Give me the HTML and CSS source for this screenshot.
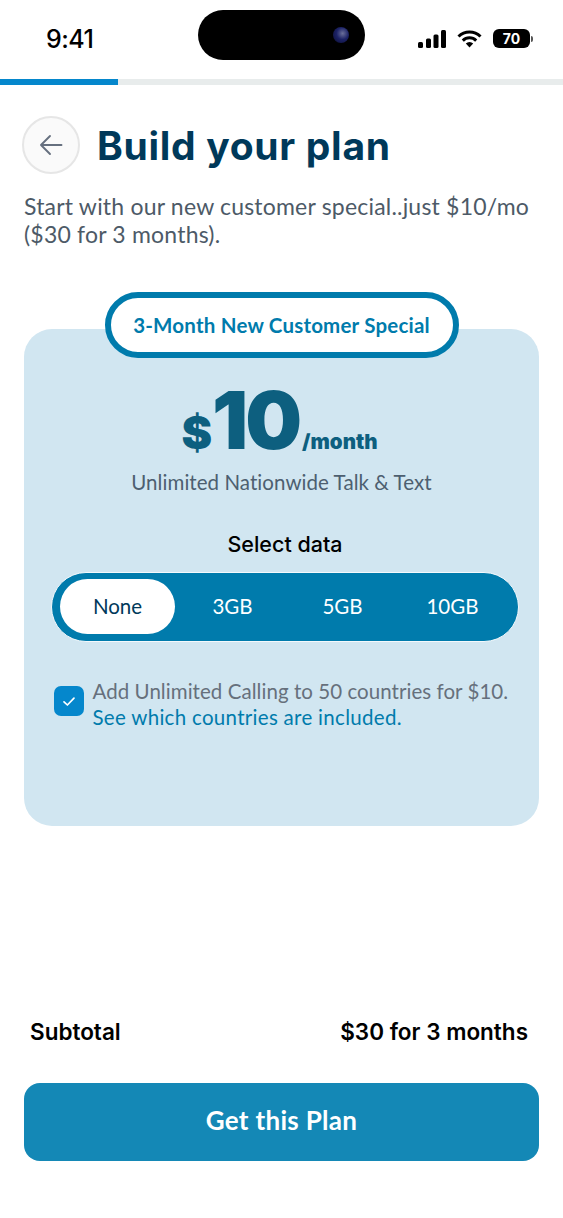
FILE: index.html
```html
<!DOCTYPE html>
<html lang="en">
<head>
    <meta charset="UTF-8">
    <meta name="viewport" content="width=device-width, initial-scale=1.0">
    <title>Build your plan</title>
    <link rel="stylesheet" href="styles.css">
</head>
<body>
    <div class="phone">
        <div class="status-bar">
            <span class="time">9:41</span>
            <div class="island"><span class="camera"></span></div>
            <div class="status-icons">
                <svg width="28" height="18" viewBox="0 0 28 18">
                    <rect x="0" y="12" width="5" height="6" rx="1.5" fill="#000"/>
                    <rect x="8" y="8.5" width="5" height="9.5" rx="1.5" fill="#000"/>
                    <rect x="15.5" y="4.5" width="5" height="13.5" rx="1.5" fill="#000"/>
                    <rect x="23" y="0" width="5" height="18" rx="1.5" fill="#000"/>
                </svg>
                <svg width="25" height="18" viewBox="0 0 25 18">
                    <path d="M1.5 6.5a15.5 15.5 0 0 1 22 0" fill="none" stroke="#000" stroke-width="3"/>
                    <path d="M5.8 10.6a9.5 9.5 0 0 1 13.4 0" fill="none" stroke="#000" stroke-width="3"/>
                    <path d="M8.8 13.6l3.7 4 3.7-4a5.2 5.2 0 0 0-7.4 0z" fill="#000"/>
                </svg>
                <div class="battery"><span class="battery-level">70</span><span class="battery-tip"></span></div>
            </div>
        </div>

        <div class="progress"><div class="progress-fill"></div></div>

        <div class="content">
            <div class="header">
                <button type="button" class="back-button">
                    <svg width="24" height="22" viewBox="0 0 24 22">
                        <path d="M22.5 11H2M11 2l-9 9 9 9" fill="none" stroke="#66707f" stroke-width="1.9" stroke-linecap="round" stroke-linejoin="round"/>
                    </svg>
                </button>
                <h1>Build your plan</h1>
            </div>
            <p class="intro">Start with our new customer special..just $10/mo ($30 for 3 months).</p>

            <div class="plan-card">
                <div class="special-pill">3-Month New Customer Special</div>
                <div class="price">
                    <span class="price-dollar">$</span><span class="price-amount">10</span><span class="price-unit">/month</span>
                </div>
                <p class="plan-name">Unlimited Nationwide Talk &amp; Text</p>
                <h2>Select data</h2>
                <div class="data-picker">
                    <button type="button" class="data-option active">None</button>
                    <button type="button" class="data-option">3GB</button>
                    <button type="button" class="data-option">5GB</button>
                    <button type="button" class="data-option">10GB</button>
                </div>
                <div class="calling-addon">
                    <span class="checkbox">
                        <svg width="14" height="11" viewBox="0 0 14 11">
                            <path d="M2 5.8l3.4 3.2L12 2.2" fill="none" stroke="#fff" stroke-width="1.7" stroke-linecap="round" stroke-linejoin="round"/>
                        </svg>
                    </span>
                    <p>Add Unlimited Calling to 50 countries for $10.<br><a href="#">See which countries are included.</a></p>
                </div>
            </div>

            <div class="subtotal">
                <span>Subtotal</span>
                <span>$30 for 3 months</span>
            </div>
            <button type="button" class="cta">Get this Plan</button>
        </div>
    </div>
</body>
</html>
```

FILE: styles.css
```css
body {
    margin: 0;
    background-color: #fff;
    font-family: "Lato", "Liberation Sans", sans-serif;
}
p, h1, h2 {
    margin: 0;
}
button {
    font-family: inherit;
    border: none;
    padding: 0;
}
.phone {
    width: 563px;
    height: 1218px;
    overflow: hidden;
}

/* status bar */
.status-bar {
    height: 79px;
    display: flex;
    align-items: flex-start;
}
.time {
    width: 198px;
    box-sizing: border-box;
    padding: 24px 0 0 46px;
    font-family: "Inter", sans-serif;
    font-size: 25px;
    line-height: 30px;
    font-weight: 500;
    letter-spacing: -0.5px;
    color: #000;
}
.island {
    width: 167px;
    height: 50px;
    margin-top: 10px;
    border-radius: 25px;
    background-color: #000;
    display: flex;
    justify-content: flex-end;
    align-items: center;
    padding-right: 16px;
    box-sizing: border-box;
}
.camera {
    width: 16px;
    height: 16px;
    border-radius: 50%;
    background: radial-gradient(circle at 60% 40%, #6a6f9a 0, #1c2266 45%, #0a0c2c 100%);
}
.status-icons {
    display: flex;
    align-items: center;
    margin: 29px 0 0 53px;
    gap: 11px;
}
.battery {
    display: flex;
    align-items: center;
}
.battery-level {
    width: 37px;
    height: 19px;
    border-radius: 6px;
    background-color: #000;
    color: #fff;
    font-family: "Inter", sans-serif;
    font-size: 14px;
    font-weight: 700;
    line-height: 19px;
    text-align: center;
}
.battery-tip {
    width: 2px;
    height: 6px;
    margin-left: 1px;
    border-radius: 0 2px 2px 0;
    background-color: #555;
}

/* progress */
.progress {
    height: 6px;
    background-color: #e8ecec;
}
.progress-fill {
    width: 118px;
    height: 100%;
    background-color: #0587cc;
}

.content {
    padding: 31px 24px 0;
}
.header {
    display: flex;
    align-items: center;
    gap: 17px;
}
.back-button {
    width: 58px;
    height: 58px;
    margin-left: -2px;
    border-radius: 50%;
    border: 2px solid #e6e6e6;
    background-color: #fafafa;
    display: flex;
    align-items: center;
    justify-content: center;
    box-sizing: border-box;
}
h1 {
    font-family: "Inter", sans-serif;
    font-size: 39px;
    line-height: 60px;
    height: 58px;
    font-weight: 700;
    letter-spacing: 0.7px;
    color: #00395a;
}
.intro {
    margin-top: 18px;
    font-size: 23px;
    line-height: 28px;
    letter-spacing: 0.2px;
    color: #4d5a67;
}

/* plan card */
.plan-card {
    height: 497px;
    margin-top: 81px;
    border-radius: 28px;
    background-color: #d1e6f1;
    display: flex;
    flex-direction: column;
    align-items: center;
    box-sizing: border-box;
}
.special-pill {
    width: 354px;
    height: 66px;
    margin-top: -37px;
    border: 6px solid #007bac;
    border-radius: 33px;
    background-color: #fff;
    box-sizing: border-box;
    color: #007bac;
    font-size: 20.5px;
    font-weight: 700;
    letter-spacing: 0.2px;
    line-height: 54px;
    text-align: center;
}
.price {
    display: flex;
    align-items: baseline;
    margin: 22px 4px 0 0;
    height: 80px;
    font-family: "Inter", sans-serif;
    color: #0d5f7f;
    font-weight: 900;
}
.price-dollar {
    font-size: 46px;
}
.price-amount {
    font-size: 80px;
    line-height: 80px;
    letter-spacing: -3px;
}
.price-unit {
    font-size: 20.5px;
    margin-left: 3px;
}
.plan-name {
    margin-top: 9px;
    font-size: 20.5px;
    line-height: 26px;
    letter-spacing: 0.05px;
    color: #4d5f70;
}
h2 {
    margin: 36px 0 0 7px;
    font-family: "Inter", sans-serif;
    font-size: 21.5px;
    line-height: 26px;
    font-weight: 500;
    color: #000;
}
.data-picker {
    width: 468px;
    height: 70px;
    margin: 15px 0 0 6px;
    border: 1.5px solid #f4f9fc;
    border-radius: 35px;
    background-color: #007bac;
    box-sizing: border-box;
    display: flex;
    align-items: center;
    padding: 0 0 2px 8.5px;
}
.data-option {
    flex: 0 0 110px;
    background: none;
    color: #fff;
    font-size: 20.5px;
    line-height: 55px;
}
.data-option.active {
    flex: 0 0 115px;
    height: 55px;
    margin-right: 2.5px;
    border-radius: 27.5px;
    background-color: #fff;
    color: #00395a;
}
.calling-addon {
    width: 456px;
    margin-top: 36px;
    display: flex;
    align-items: flex-start;
    gap: 9px;
}
.checkbox {
    flex: 0 0 30px;
    height: 30px;
    margin-top: 8px;
    border-radius: 7px;
    background-color: #0587cc;
    display: flex;
    align-items: center;
    justify-content: center;
}
.calling-addon p {
    font-size: 20.5px;
    line-height: 26px;
    letter-spacing: 0.05px;
    color: #66707c;
    white-space: nowrap;
}
.calling-addon a {
    color: #007bac;
    letter-spacing: 0.3px;
    text-decoration: none;
}

/* footer */
.subtotal {
    display: flex;
    justify-content: space-between;
    margin-top: 192px;
    padding: 0 11px 0 6px;
    font-family: "Inter", sans-serif;
    font-size: 22.5px;
    line-height: 28px;
    font-weight: 600;
    color: #000;
}
.cta {
    display: block;
    width: 100%;
    height: 78px;
    margin-top: 37px;
    padding-bottom: 4px;
    border-radius: 16px;
    background-color: #1488b6;
    color: #fff;
    font-size: 26px;
    font-weight: 700;
    letter-spacing: 0.3px;
}
```
